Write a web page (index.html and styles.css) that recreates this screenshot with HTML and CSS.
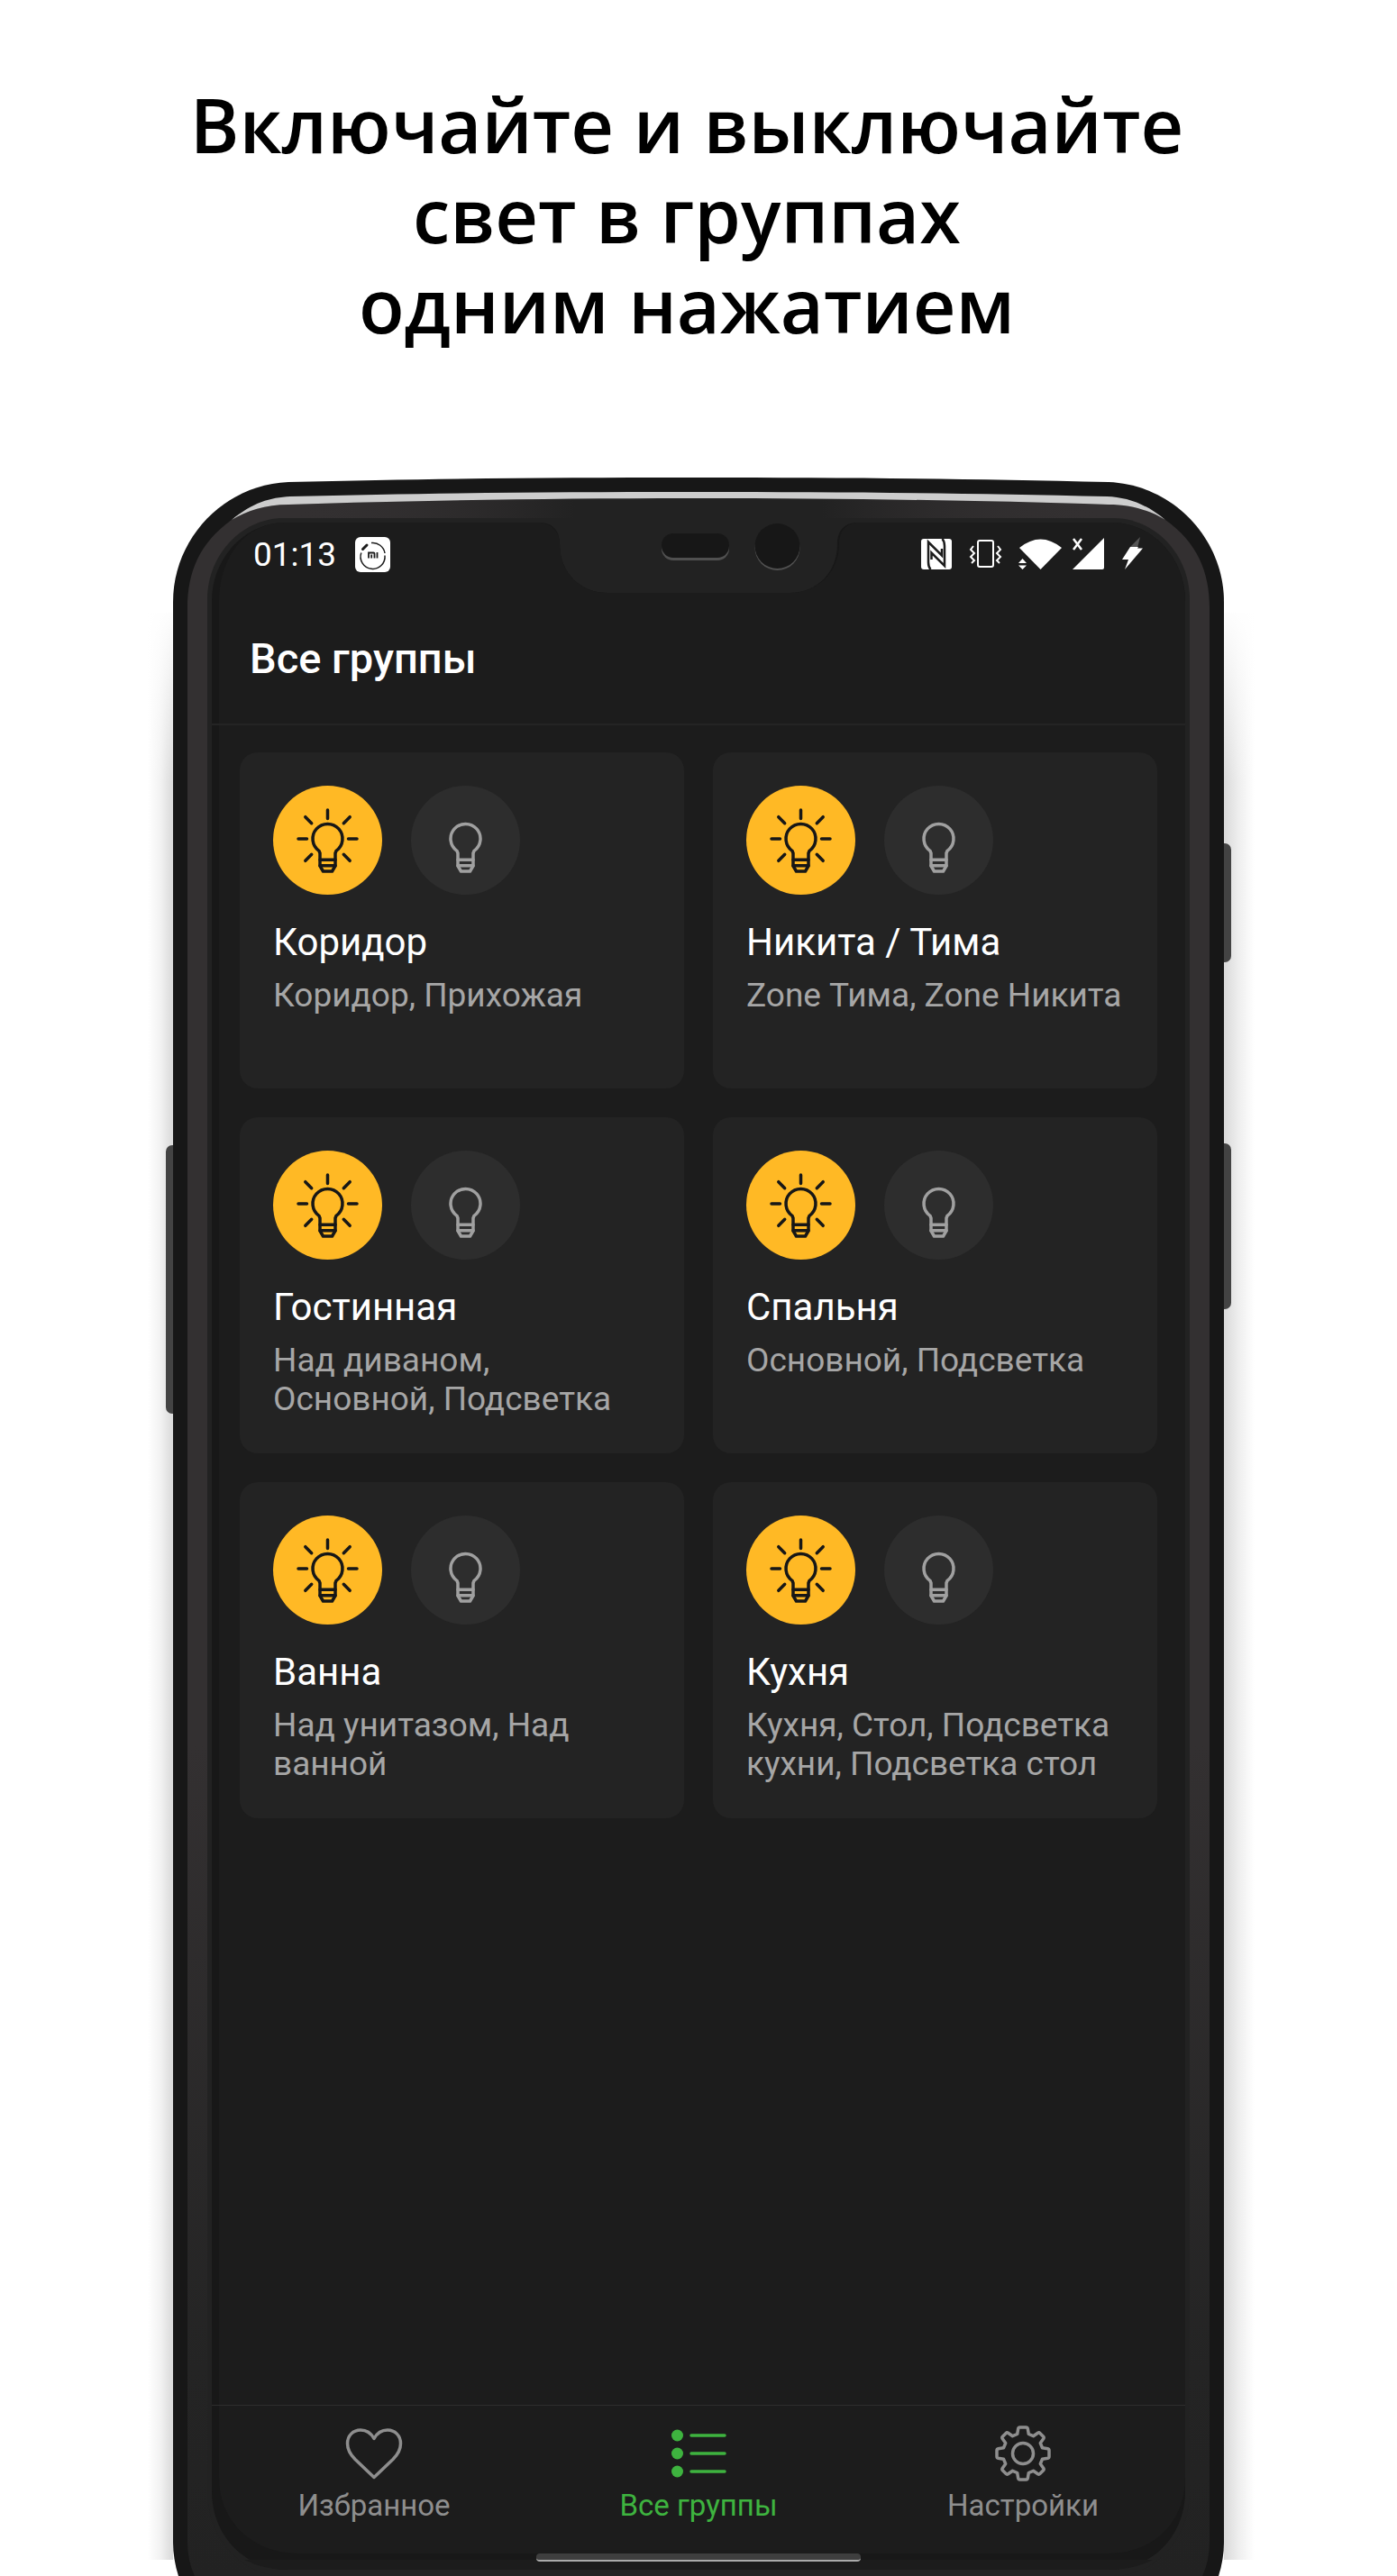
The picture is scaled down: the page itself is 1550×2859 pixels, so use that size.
FILE: index.html
```html
<!DOCTYPE html>
<html lang="ru">
<head>
<meta charset="utf-8">
<meta name="viewport" content="width=device-width, initial-scale=1">
<title>Все группы</title>
<link rel="stylesheet" href="styles.css">
</head>
<body>
<svg class="sprite" aria-hidden="true">
  <symbol id="bulb" viewBox="0 0 121 121">
    <path d="M51 72.4A16.5 16.5 0 1 1 70 72.4L69 75V89L65.500 95H55.500L52 89V75Z"/>
    <path d="M52 82.300H69M52 88.800H69"/>
  </symbol>
  <symbol id="rays" viewBox="0 0 121 121">
    <path d="M60.500 27V36.500M28 59H37.500M83.500 59H93M78.300 41.700L85.200 34.700M42.700 41.700L35.800 34.700M42.700 76.300L35.800 83.300M78.300 76.300L85.200 83.300"/>
  </symbol>
</svg>

<header class="hero">
  <h1 class="hero-title">Включайте и выключайте<br>свет в группах<br>одним нажатием</h1>
</header>

<div class="phone">
  <svg class="frame" viewBox="0 0 1250 2329" preserveAspectRatio="xMidYMin meet" aria-hidden="true">
    <defs>
      <linearGradient id="shadeL" x1="1" x2="0" y1="0" y2="0">
        <stop offset="0" stop-color="#d9d9d9"/><stop offset=".5" stop-color="#f2f2f2"/><stop offset="1" stop-color="#fff"/>
      </linearGradient>
      <linearGradient id="shadeR" x1="0" x2="1" y1="0" y2="0">
        <stop offset="0" stop-color="#d9d9d9"/><stop offset=".5" stop-color="#efefef"/><stop offset="1" stop-color="#fff"/>
      </linearGradient>
      <linearGradient id="fade" x1="0" x2="0" y1="0" y2="1">
        <stop offset="0" stop-color="#fff"/><stop offset="1" stop-color="#fff" stop-opacity="0"/>
      </linearGradient>
      <linearGradient id="metal" x1="0" x2="0" y1="0" y2="1">
        <stop offset="0" stop-color="#333031"/><stop offset=".6" stop-color="#333031"/><stop offset=".9" stop-color="#242424"/><stop offset="1" stop-color="#222"/>
      </linearGradient>
      <linearGradient id="lip" x1="0" x2="1" y1="0" y2="0">
        <stop offset="0" stop-color="#333031" stop-opacity="0"/><stop offset=".35" stop-color="#222"/><stop offset=".65" stop-color="#222"/><stop offset="1" stop-color="#333031" stop-opacity="0"/>
      </linearGradient>
    </defs>
    <rect x="14" y="150" width="28" height="2161" fill="url(#shadeL)"/>
    <rect x="1208" y="150" width="34" height="2161" fill="url(#shadeR)"/>
    <rect x="0" y="140" width="42" height="200" fill="url(#fade)"/>
    <rect x="1208" y="140" width="42" height="200" fill="url(#fade)"/>
    <rect x="34" y="741" width="20" height="298" rx="7" fill="#434343"/>
    <rect x="1196" y="406" width="20" height="132" rx="7" fill="#434343"/>
    <rect x="1196" y="739" width="20" height="184" rx="7" fill="#434343"/>
    <path fill="#171717" d="M42 138C42 68 98 8 170 5C330 1 470 0 625 0S920 1 1080 5C1152 8 1208 68 1208 138V2292Q1208 2310 1202 2329H48Q42 2310 42 2292Z"/>
    <path fill="url(#metal)" d="M58 145C58 104 72 72 107 47C123 37 145 30 170 30C330 25 470 23 625 23S920 25 1080 30C1105 30 1127 37 1143 47C1178 72 1192 104 1192 145V2290Q1192 2312 1184 2329H66Q58 2312 58 2290Z"/>
    <path fill="url(#lip)" d="M170 30C330 25 470 23 625 23S920 25 1080 30V130H170Z"/>
    <path fill="#cdcdcd" d="M107 47C130 28 150 22 172 21C330 17 470 16 625 16S920 17 1078 21C1100 22 1120 28 1143 47C1127 37 1105 30 1080 30C920 25 780 23 625 23S330 25 170 30C145 30 123 37 107 47Z"/>
    <path fill="#222" d="M80 135C80 86 118 45 165 45H1085C1132 45 1170 86 1170 135V2235C1170 2290 1130 2329 1085 2329H165C120 2329 80 2290 80 2235Z"/>
    <path fill="#181818" d="M85 137C85 90 121 50 167 50H449C463 50 471 59 471 74C471 105 493 128 524 128H726C757 128 779 105 779 74C779 59 787 50 801 50H1083C1129 50 1165 90 1165 137V2235C1165 2284 1129 2322 1080 2322H170C121 2322 85 2284 85 2235Z"/>
    <path fill="#1c1c1c" d="M93 137C93 90 121 50 167 50H447C461 50 471 59 471 74C471 105 493 128 524 128H726C757 128 781 105 781 74C781 59 789 50 803 50H1083C1129 50 1165 90 1165 137V2220C1165 2270 1129 2304 1080 2304H181C132 2304 93 2270 93 2220Z"/>
    <path fill="#1c1c1c" d="M121 2311H1129Q1107 2322 1080 2322H170Q143 2322 121 2311Z"/>
    <rect x="584" y="65" width="75" height="27" rx="13" fill="#505050"/>
    <rect x="584" y="62" width="75" height="27" rx="13" fill="#171717"/>
    <circle cx="712.500" cy="78" r="25" fill="#505050"/>
    <circle cx="712.500" cy="76" r="25" fill="#171717"/>
  </svg>

  <main class="screen">
    <div class="status">
      <div class="status-left">
        <time>01:13</time>
        <svg class="mi" viewBox="0 0 40 40" aria-hidden="true">
          <rect x="0" y="0" width="39" height="39" rx="6" fill="#fff"/>
          <path d="M18 6.600A13.500 13.500 0 0 1 33 18M33 20.500A13.500 13.500 0 1 1 6.800 17.500" fill="none" stroke="#1c1c1c" stroke-width="1.500"/>
          <path d="M8.500 13.500L13 9" stroke="#1c1c1c" stroke-width="3" stroke-linecap="round"/>
          <path d="M15 23.500V17.500H20.500Q21.500 17.500 21.500 18.500V23.500M18.200 19.500V23.500M24.500 17V23.500" fill="none" stroke="#1c1c1c" stroke-width="1.800"/>
        </svg>
      </div>
      <svg class="indicators" viewBox="0 0 250 40" aria-hidden="true">
        <g fill="#fff">
          <rect x="2" y="2" width="34" height="34" rx="3"/>
          <path d="M134.500 36L111 12Q134.500 -7 158 12Z"/>
          <path d="M110 29L114.500 24L119 29ZM110 31.500H119L114.500 36Z" stroke="#1c1c1c" stroke-width="3" paint-order="stroke"/>
          <path d="M170 36L205 1V34Q205 36 203 36Z"/>
          <path d="M234 11L245 0L242 12Z" opacity=".25"/>
          <path d="M234 11H243L242 12.500H248L228 36L232 25H225Z"/>
        </g>
        <g fill="none" stroke="#1c1c1c" stroke-width="2.500">
          <path d="M12.500 36Q10 33 10 28V5.500L25 20.500V13"/>
          <path d="M25.500 2Q28 5 28 10V32L13.500 17.500V25"/>
        </g>
        <g fill="none" stroke="#fff" stroke-width="2">
          <path stroke-width="2.500" d="M171 2L180 14M180 2L171 14"/>
          <rect x="65" y="4" width="17" height="29" rx="2"/>
          <path d="M60 10L57 14L61 18L57 22L61 26L58 29M87 10L90 14L86 18L90 22L86 26L89 29"/>
        </g>
      </svg>
    </div>

    <h2 class="page-title">Все группы</h2>

    <div class="groups">
      <article class="card">
        <div class="switches">
          <button class="light on" type="button" aria-label="Включить: Коридор"><svg><use href="#bulb"/><use href="#rays"/></svg></button>
          <button class="light" type="button" aria-label="Выключить: Коридор"><svg><use href="#bulb"/></svg></button>
        </div>
        <h3>Коридор</h3>
        <p>Коридор, Прихожая</p>
      </article>
      <article class="card">
        <div class="switches">
          <button class="light on" type="button" aria-label="Включить: Никита / Тима"><svg><use href="#bulb"/><use href="#rays"/></svg></button>
          <button class="light" type="button" aria-label="Выключить: Никита / Тима"><svg><use href="#bulb"/></svg></button>
        </div>
        <h3>Никита / Тима</h3>
        <p>Zone Тима, Zone Никита</p>
      </article>
      <article class="card">
        <div class="switches">
          <button class="light on" type="button" aria-label="Включить: Гостинная"><svg><use href="#bulb"/><use href="#rays"/></svg></button>
          <button class="light" type="button" aria-label="Выключить: Гостинная"><svg><use href="#bulb"/></svg></button>
        </div>
        <h3>Гостинная</h3>
        <p>Над диваном, Основной, Подсветка</p>
      </article>
      <article class="card">
        <div class="switches">
          <button class="light on" type="button" aria-label="Включить: Спальня"><svg><use href="#bulb"/><use href="#rays"/></svg></button>
          <button class="light" type="button" aria-label="Выключить: Спальня"><svg><use href="#bulb"/></svg></button>
        </div>
        <h3>Спальня</h3>
        <p>Основной, Подсветка</p>
      </article>
      <article class="card">
        <div class="switches">
          <button class="light on" type="button" aria-label="Включить: Ванна"><svg><use href="#bulb"/><use href="#rays"/></svg></button>
          <button class="light" type="button" aria-label="Выключить: Ванна"><svg><use href="#bulb"/></svg></button>
        </div>
        <h3>Ванна</h3>
        <p>Над унитазом, Над ванной</p>
      </article>
      <article class="card">
        <div class="switches">
          <button class="light on" type="button" aria-label="Включить: Кухня"><svg><use href="#bulb"/><use href="#rays"/></svg></button>
          <button class="light" type="button" aria-label="Выключить: Кухня"><svg><use href="#bulb"/></svg></button>
        </div>
        <h3>Кухня</h3>
        <p>Кухня, Стол, Подсветка кухни, Подсветка стол</p>
      </article>
    </div>

    <nav class="tabs">
      <a class="tab" href="#favorites">
        <svg viewBox="0 0 64 64" aria-hidden="true"><path d="M32 58.500L11 38.500C5 32.500 2.500 27 2.500 21C2.500 12 9 6 17 6C24 6 29 10 32 15.500C35 10 40 6 47 6C55 6 61.500 12 61.500 21C61.500 27 59 32.500 53 38.500Z"/></svg>
        <span>Избранное</span>
      </a>
      <a class="tab active" href="#groups" aria-current="page">
        <svg viewBox="0 0 64 64" aria-hidden="true"><path d="M24 12H61M24 32H61M24 52H61"/><g fill="currentColor" stroke="none"><circle cx="8.500" cy="12" r="6.500"/><circle cx="8.500" cy="32" r="6.500"/><circle cx="8.500" cy="52" r="6.500"/></g></svg>
        <span>Все группы</span>
      </a>
      <a class="tab" href="#settings">
        <svg viewBox="0 0 64 64" aria-hidden="true">
          <circle cx="32" cy="32" r="11.500"/>
          <path d="M28.500 3H35.500Q37 3 37.300 4.500L38.300 10.500L43.500 12.700L48.500 9.200Q49.800 8.400 50.800 9.400L54.600 13.200Q55.600 14.200 54.800 15.500L51.300 20.500L53.500 25.700L59.500 26.700Q61 27 61 28.500V35.500Q61 37 59.500 37.300L53.500 38.300L51.300 43.500L54.800 48.500Q55.600 49.800 54.600 50.800L50.800 54.600Q49.800 55.600 48.500 54.800L43.500 51.300L38.300 53.500L37.300 59.500Q37 61 35.500 61H28.500Q27 61 26.700 59.500L25.700 53.500L20.500 51.300L15.500 54.800Q14.200 55.600 13.200 54.600L9.400 50.800Q8.400 49.800 9.200 48.500L12.700 43.500L10.500 38.300L4.500 37.300Q3 37 3 35.500V28.500Q3 27 4.500 26.700L10.500 25.700L12.700 20.500L9.200 15.500Q8.400 14.200 9.400 13.200L13.200 9.400Q14.200 8.400 15.500 9.200L20.500 12.700L25.700 10.500L26.700 4.500Q27 3 28.500 3Z"/>
        </svg>
        <span>Настройки</span>
      </a>
    </nav>
    <div class="home-bar"></div>
  </main>
</div>
</body>
</html>
```
FILE: styles.css
```css
* {
  box-sizing: border-box;
}

body {
  margin: 0;
  background: #fff;
  color: #fff;
  font-family: Roboto, "Noto Sans", sans-serif;
}

h1, h2, h3, p {
  margin: 0;
}

.sprite {
  display: none;
}

.hero {
  padding: 88px 26px 132px 0;
}

.hero-title {
  color: #000;
  font: 600 83px/100px "Open Sans", "Noto Sans", sans-serif;
  text-align: center;
}

.phone {
  position: relative;
  max-width: 1250px;
  margin: 10px auto 0;
  padding: 50px 85px 0;
  overflow: hidden;
}

.frame {
  position: absolute;
  top: 0;
  left: 0;
  width: 100%;
}

.screen {
  position: relative;
  display: flex;
  flex-direction: column;
}

.status {
  display: flex;
  justify-content: space-between;
  align-items: center;
  height: 72px;
  padding: 0 45px 0 46px;
}

.status-left {
  display: flex;
  align-items: center;
  gap: 21px;
  font-size: 37px;
  line-height: 42px;
}

.mi {
  width: 40px;
  height: 40px;
}

.indicators {
  width: 250px;
  height: 40px;
}

.page-title {
  padding: 51px 42px 44px;
  border-bottom: 2px solid #242424;
  font-size: 47px;
  font-weight: 500;
  line-height: 56px;
}

.groups {
  display: grid;
  grid-template-columns: 1fr 1fr;
  grid-auto-rows: minmax(373px, auto);
  gap: 32px;
  padding: 30px 31px 651px;
}

.card {
  padding: 37px 37px 36px;
  border-radius: 20px;
  background: #232323;
}

.switches {
  display: flex;
  gap: 32px;
  margin-bottom: 29px;
}

.light {
  width: 121px;
  height: 121px;
  padding: 0;
  border: 0;
  border-radius: 50%;
  background: #2d2d2d;
  color: #a0a0a0;
}

.light.on {
  background: #ffb925;
  color: #171717;
}

.light svg {
  display: block;
  width: 121px;
  height: 121px;
  fill: none;
  stroke: currentColor;
  stroke-width: 3.5;
  stroke-linecap: round;
  stroke-linejoin: round;
}

.card h3 {
  font-size: 42px;
  font-weight: 400;
  line-height: 48px;
}

.card p {
  margin-top: 13px;
  color: #a6a6a6;
  font-size: 37px;
  line-height: 43px;
}

.tabs {
  display: grid;
  grid-template-columns: repeat(3, 1fr);
  height: 165px;
  border-top: 1px solid #2d2d2d;
}

.tab {
  display: flex;
  flex-direction: column;
  align-items: center;
  gap: 7px;
  padding-top: 21px;
  color: #8e8e8e;
  font-size: 33px;
  line-height: 38px;
  text-decoration: none;
}

.tab.active {
  color: #3eb33f;
}

.tab svg {
  width: 64px;
  height: 64px;
  fill: none;
  stroke: currentColor;
  stroke-width: 3.5;
  stroke-linejoin: round;
  stroke-linecap: round;
}

.home-bar {
  width: 360px;
  height: 9px;
  margin: 0 auto 16px;
  border-bottom: 2px solid #aaa;
  border-radius: 4px;
  background: #3f3f3f;
}
```
